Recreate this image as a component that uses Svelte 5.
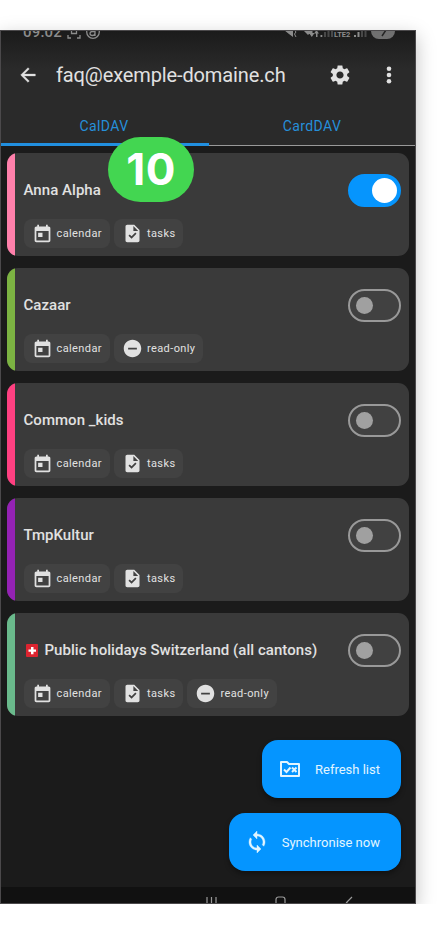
<script lang="ts">
	type ChipKind = 'calendar' | 'tasks' | 'read-only';

	interface Collection {
		name: string;
		color: string;
		chips: ChipKind[];
		enabled: boolean;
		swiss?: boolean;
	}

	let collections = $state<Collection[]>([
		{ name: 'Anna Alpha', color: '#ff80ab', chips: ['calendar', 'tasks'], enabled: true },
		{ name: 'Cazaar', color: '#7cb342', chips: ['calendar', 'read-only'], enabled: false },
		{ name: 'Common _kids', color: '#ff4081', chips: ['calendar', 'tasks'], enabled: false },
		{ name: 'TmpKultur', color: '#9422b4', chips: ['calendar', 'tasks'], enabled: false },
		{
			name: 'Public holidays Switzerland (all cantons)',
			color: '#6aba8c',
			chips: ['calendar', 'tasks', 'read-only'],
			enabled: false,
			swiss: true
		}
	]);

	const icons: Record<ChipKind, string> = {
		calendar:
			'M19 4h-1V2h-2v2H8V2H6v2H5c-1.1 0-2 .9-2 2v14c0 1.1.9 2 2 2h14c1.1 0 2-.9 2-2V6c0-1.1-.9-2-2-2zm0 16H5V9h14v11zM7 11h5v5H7z',
		tasks:
			'M14 2H6c-1.1 0-2 .9-2 2v16c0 1.1.9 2 2 2h12c1.1 0 2-.9 2-2V8l-6-6zm-3.06 16L7.4 14.46l1.41-1.41 2.12 2.12 4.24-4.24 1.41 1.41L10.94 18zM13 9V3.5L18.5 9H13z',
		'read-only': 'M12 2C6.48 2 2 6.48 2 12s4.48 10 10 10 10-4.48 10-10S17.52 2 12 2zm5 11H7v-2h10v2z'
	};
</script>

<div class="phone">
	<header>
		<div class="status">
			<span class="clock">09:02</span>
			<svg class="status-left" width="36" height="14" viewBox="0 0 36 14" fill="none" stroke="currentColor" stroke-width="1.3">
				<path d="M1 4V1h3M10 1h3v3M1 10v3h3M10 13h3v-3M4.500 3v5.500h5V3" />
				<circle cx="26" cy="7" r="6.300" />
				<path d="M23.500 4.500q4.500-2 4.500 1V11M28 6.500h-2.500q-2.500 0-2.500 2t2.500 2q2 0 2.500-2" />
			</svg>
			<span class="space"></span>
			<svg width="111" height="16" viewBox="0 0 111 16" fill="currentColor">
				<path d="M0 7h4l5-4v11l-4-3z" />
				<path d="M10.500 7l1.500 2-1.500 2 1.500 3" fill="none" stroke="currentColor" />
				<path d="M20 8q4-3 8 0l-4 4zM25 10h2V7h1.500v3h2l-2.700 4zM32 14V10.500h-2L32.500 7 35 10.500h-1.500V14zM36.500 12h1.800v2h-1.800z" />
				<path d="M40 9h2v5h-2zM43.500 6h2v8h-2zM47 3h2v11h-2z" opacity=".4" />
				<text x="50" y="14" font-size="7.500" font-weight="700">LTE2</text>
				<path d="M70 12h2v2h-2zM73.500 9h2v5h-2z" />
				<path d="M77 6h2v8h-2zM80.500 3h2v11h-2z" opacity=".4" />
				<rect x="87" y="0" width="24" height="16" rx="8" opacity=".75" />
				<path d="M96 7h6l-4 6" fill="none" stroke="#242424" stroke-width="1.500" />
			</svg>
		</div>

		<div class="toolbar">
			<svg class="back" width="22" height="22" viewBox="0 0 24 24" fill="currentColor">
				<path d="M20 11H7.830l5.590-5.590L12 4l-8 8 8 8 1.410-1.410L7.830 13H20v-2z" stroke="currentColor" stroke-width=".4" />
			</svg>
			<h1>faq@exemple-domaine.ch</h1>
			<svg class="gear" width="24" height="24" viewBox="0 0 24 24" fill="currentColor">
				<path d="M19.140 12.940c.04-.3.060-.61.060-.94 0-.32-.02-.64-.07-.94l2.030-1.580c.18-.14.230-.41.120-.61l-1.920-3.320c-.12-.22-.37-.29-.59-.22l-2.390.96c-.5-.38-1.030-.7-1.620-.94l-.36-2.540c-.04-.24-.24-.41-.48-.41h-3.840c-.24 0-.43.170-.47.410l-.36 2.540c-.59.240-1.130.570-1.620.94l-2.390-.96c-.22-.08-.47 0-.59.220L2.740 8.870c-.12.210-.08.470.120.610l2.030 1.580c-.05.3-.09.630-.09.940s.02.640.070.94l-2.030 1.580c-.18.140-.23.410-.12.610l1.920 3.320c.12.220.370.290.590.220l2.390-.96c.5.380 1.030.7 1.620.94l.36 2.540c.05.240.240.410.480.410h3.840c.24 0 .44-.17.470-.41l.36-2.540c.59-.24 1.130-.56 1.620-.94l2.390.96c.22.080.470 0 .59-.22l1.920-3.320c.12-.22.070-.47-.12-.61l-2.010-1.580zM12 15.600c-1.980 0-3.600-1.620-3.600-3.600s1.620-3.600 3.600-3.600 3.600 1.620 3.600 3.600-1.620 3.600-3.600 3.600z" />
			</svg>
			<svg class="more" width="24" height="24" viewBox="0 0 24 24" fill="currentColor">
				<circle cx="12" cy="5.700" r="2.300" />
				<circle cx="12" cy="12" r="2.300" />
				<circle cx="12" cy="18.300" r="2.300" />
			</svg>
		</div>

		<nav class="tabs">
			<button class="tab active">CalDAV</button>
			<button class="tab">CardDAV</button>
		</nav>
		<div class="step">10</div>
	</header>

	<main>
		{#each collections as item}
			<div class="card">
				<span class="stripe" style="background: {item.color}"></span>
				<div class="info">
					<div class="name">
						{#if item.swiss}
							<svg class="flag" width="12" height="13" viewBox="0 0 12 13">
								<rect width="12" height="13" rx="1" fill="#dc2430" />
								<path d="M5 3h2.500v2.500H10v2.200H7.500v2.500H5V7.700H2.500V5.500H5z" fill="#fff" />
							</svg>
						{/if}
						<span>{item.name}</span>
					</div>
					<div class="chips">
						{#each item.chips as chip}
							<span class="chip">
								<svg width="21" height="21" viewBox="0 0 24 24" fill="currentColor"><path d={icons[chip]} /></svg>
								{chip}
							</span>
						{/each}
					</div>
				</div>
				<button
					class="switch"
					class:on={item.enabled}
					role="switch"
					aria-checked={item.enabled}
					aria-label={item.name}
					onclick={() => (item.enabled = !item.enabled)}
				><span class="thumb"></span></button>
			</div>
		{/each}
	</main>

	<div class="actions">
		<button class="fab refresh">
			<svg width="24" height="24" viewBox="0 0 24 24" fill="none" stroke="currentColor" stroke-width="2">
				<path d="M3 5h6l2 2h10v12H3z" stroke-linejoin="round" />
				<path d="M6 12.500l2.500 2.500 4-4.500M14 10.500l4.500 4.500M18.500 10.500L14 15" />
			</svg>
			<span>Refresh list</span>
		</button>
		<button class="fab sync">
			<svg width="24" height="24" viewBox="0 0 24 24" fill="currentColor">
				<path d="M12 4V1L8 5l4 4V6c3.310 0 6 2.690 6 6 0 1.010-.25 1.970-.7 2.800l1.460 1.460C19.540 15.030 20 13.570 20 12c0-4.420-3.580-8-8-8zm0 14c-3.310 0-6-2.690-6-6 0-1.010.25-1.970.7-2.800L5.240 7.740C4.460 8.970 4 10.430 4 12c0 4.420 3.580 8 8 8v3l4-4-4-4v3z" stroke="currentColor" stroke-width=".4" />
			</svg>
			<span>Synchronise now</span>
		</button>
	</div>

	<footer>
		<svg width="152" height="12" viewBox="0 0 152 12" fill="none" stroke="currentColor" stroke-width="1.200">
			<path d="M1 1v11M5.500 1v11M10 1v11" />
			<rect x="70" y="1" width="9" height="12" rx="2.500" />
			<path d="M146 1L140.500 6.500l5.500 5.500" />
		</svg>
	</footer>
</div>

<style>
	:global(body) {
		background: #fff;
		overflow: hidden;
	}
	.phone {
		box-sizing: border-box;
		width: 416px;
		height: 874px;
		margin-top: 30px;
		display: flex;
		flex-direction: column;
		border: 1px solid #4b494b;
		background: #1b1b1b;
		color: #e1e1e1;
		font-family: Roboto, sans-serif;
		box-shadow: 0 6px 18px rgba(0, 0, 0, 0.25);
	}
	button {
		border: none;
		padding: 0;
		font-family: inherit;
		cursor: pointer;
	}
	header {
		position: relative;
		height: 115px;
		flex: none;
		background: linear-gradient(#1b1b1b, #2a2a2a 38px);
	}
	.status {
		height: 8px;
		padding: 0 20px 0 22px;
		display: flex;
		align-items: flex-end;
		overflow: hidden;
		color: #8c8c8c;
	}
	.status svg {
		flex: none;
	}
	.clock {
		font-size: 15px;
		line-height: 18px;
		font-weight: 500;
		letter-spacing: 0.2px;
		margin-bottom: -2px;
	}
	.status-left {
		margin: 0 0 0 5px;
	}
	.space {
		flex: 1;
	}
	.toolbar {
		height: 71px;
		display: flex;
		align-items: center;
	}
	.back {
		margin-left: 16px;
	}
	h1 {
		margin: 0 0 0 17px;
		font-size: 20px;
		font-weight: 400;
		letter-spacing: -0.12px;
		flex: 1;
	}
	.gear {
		margin-right: 25px;
	}
	.more {
		margin-right: 14px;
	}
	.tabs {
		height: 36px;
		display: flex;
	}
	.tab {
		flex: 1;
		padding: 0 0 4px;
		background: none;
		color: #268fd9;
		font-size: 14px;
		letter-spacing: 0.4px;
		border-bottom: 1px solid #999;
	}
	.tab.active {
		padding: 0 2px 2px 0;
		border-bottom: 3px solid #218fdf;
	}
	.step {
		position: absolute;
		left: 107px;
		top: 106px;
		width: 86px;
		height: 65px;
		box-sizing: border-box;
		border-radius: 33px;
		background: #43d651;
		color: #fff;
		font: 700 44px/65px Inter, sans-serif;
		letter-spacing: 0.5px;
		text-align: center;
	}
	main {
		padding: 7px 6px 0;
		display: flex;
		flex-direction: column;
		gap: 12px;
	}
	.card {
		height: 103px;
		display: flex;
		border-radius: 11px;
		background: #3a3a3a;
		overflow: hidden;
	}
	.stripe {
		width: 8px;
	}
	.info {
		flex: 1;
		padding: 26px 0 0 8.5px;
	}
	.name {
		display: flex;
		align-items: center;
		height: 22px;
		font-size: 15px;
		font-weight: 500;
		letter-spacing: 0.04px;
		white-space: nowrap;
	}
	.flag {
		margin: 0 7px 0 2px;
	}
	.chips {
		display: flex;
		gap: 4px;
		margin-top: 18px;
	}
	.chip {
		height: 29px;
		box-sizing: border-box;
		padding: 0 8px;
		display: flex;
		align-items: center;
		gap: 4px;
		border-radius: 8px;
		background: #424242;
		font-size: 11px;
		letter-spacing: 0.4px;
	}
	.switch {
		box-sizing: border-box;
		width: 53px;
		height: 33px;
		margin: 21px 8.5px 0 0;
		padding: 0 6px;
		display: flex;
		align-items: center;
		border: 2px solid #999;
		border-radius: 17px;
		background: #414141;
	}
	.thumb {
		width: 17px;
		height: 17px;
		border-radius: 50%;
		background: #a0a0a0;
	}
	.switch.on {
		justify-content: flex-end;
		padding: 0 2px;
		border-color: #0695fd;
		background: #0695fd;
	}
	.on .thumb {
		width: 25px;
		height: 25px;
		background: #fff;
	}
	.actions {
		flex: 1;
		padding: 24px 14px 0 0;
		display: flex;
		flex-direction: column;
		align-items: flex-end;
		gap: 15px;
	}
	.fab {
		height: 58px;
		padding: 0 21px 0 16px;
		display: flex;
		align-items: center;
		border-radius: 16px;
		background: #0595ff;
		color: #e2f5ff;
		font-size: 13px;
		letter-spacing: 0;
		box-shadow: 0 3px 5px rgba(0, 0, 0, 0.35);
	}
	.fab span {
		flex: 1;
		text-align: right;
		white-space: nowrap;
	}
	.refresh {
		width: 139px;
	}
	.sync {
		width: 172px;
	}
	footer {
		height: 16px;
		padding-left: 205px;
		overflow: hidden;
		background: #111;
		color: #999;
	}
	footer svg {
		display: block;
		margin-top: 9px;
	}
</style>
